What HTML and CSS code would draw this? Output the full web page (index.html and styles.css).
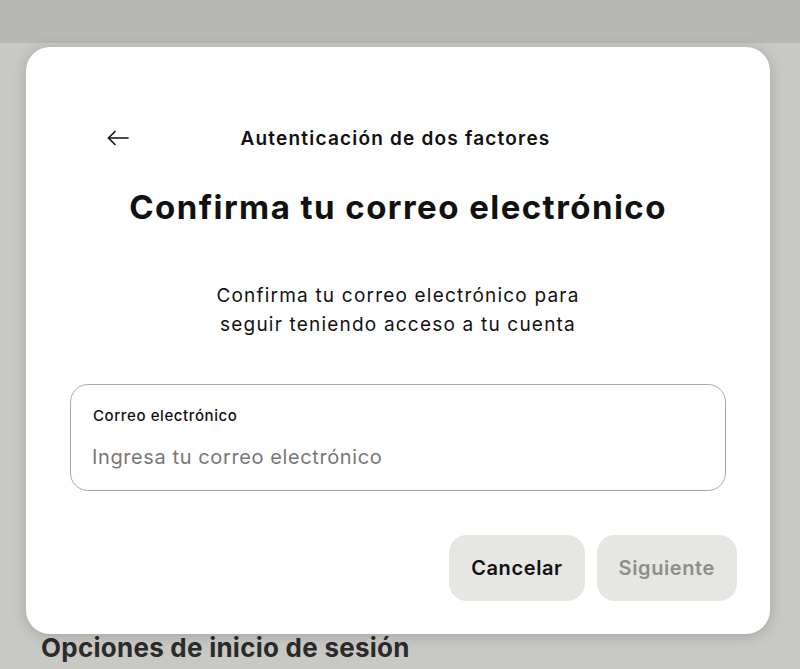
FILE: index.html
```html
<!DOCTYPE html>
<html lang="es">
<head>
    <meta charset="UTF-8">
    <meta name="viewport" content="width=device-width, initial-scale=1.0">
    <title>Autenticación de dos factores</title>
    <link rel="stylesheet" href="styles.css">
</head>
<body>

<div class="page">
    <div class="topbar"></div>
    <h3 class="section-title">Opciones de inicio de sesión</h3>
</div>

<div class="overlay">
    <div class="modal">
        <!-- Cabecera -->
        <div class="modal-header">
            <button class="btn-back" aria-label="Volver">
                <svg width="24" height="24" viewBox="0 0 24 24" fill="none" stroke="#111" stroke-width="1.6" stroke-linecap="round" stroke-linejoin="round">
                    <path d="M22 12H2.5"/>
                    <path d="M9 5.5L2.5 12L9 18.5"/>
                </svg>
            </button>
            <span class="header-title">Autenticación de dos factores</span>
        </div>

        <h1 class="modal-title">Confirma tu correo electrónico</h1>

        <p class="modal-text">Confirma tu correo electrónico para<br>seguir teniendo acceso a tu cuenta</p>

        <!-- Campo de correo -->
        <label class="field" for="email">
            <span class="field-label">Correo electrónico</span>
            <input type="email" id="email" name="email" placeholder="Ingresa tu correo electrónico">
        </label>

        <div class="modal-actions">
            <button class="btn">Cancelar</button>
            <button class="btn btn-disabled" disabled>Siguiente</button>
        </div>
    </div>
</div>

</body>
</html>
```

FILE: styles.css
```css
body {
    margin: 0;
    font-family: Inter, "Noto Sans", sans-serif;
    background-color: #c8c8c5;
    color: #111;
    height: 669px;
    overflow: hidden;
}
.page {
    height: 669px;
}
.topbar {
    height: 43px;
    background-color: #b7b8b3;
}
.section-title {
    margin: 0;
    padding-top: 589px;
    padding-left: 41px;
    font-size: 26px;
    font-weight: 700;
    color: #2b2b2a;
    letter-spacing: 0.25px;
}
.overlay {
    position: absolute;
    top: 0;
    left: 0;
    width: 800px;
    height: 669px;
}
.modal {
    margin: 47px 0 0 26px;
    width: 744px;
    height: 587px;
    box-sizing: border-box;
    background: #fff;
    border-radius: 24px;
    box-shadow: 0 2px 14px rgba(0, 0, 0, 0.18);
    display: flex;
    flex-direction: column;
    padding: 0 44px;
}
.modal-header {
    position: relative;
    height: 48px;
    margin-top: 67px;
    display: flex;
    align-items: center;
    justify-content: center;
}
.btn-back {
    position: absolute;
    left: 24px;
    top: 0;
    width: 48px;
    height: 48px;
    border: none;
    background: none;
    padding: 0;
    display: flex;
    align-items: center;
    justify-content: center;
    cursor: pointer;
}
.header-title {
    margin-right: 5px;
    font-size: 19px;
    font-weight: 600;
    letter-spacing: 1.2px;
}
.modal-title {
    margin: 23px 0 0;
    text-align: center;
    font-size: 33px;
    font-weight: 700;
    letter-spacing: 1.45px;
    line-height: 44px;
}
.modal-text {
    margin: 52px 0 0;
    text-align: center;
    font-size: 19px;
    line-height: 29px;
    letter-spacing: 1.2px;
    color: #111;
}
.field {
    display: block;
    margin-top: 45px;
    height: 107px;
    box-sizing: border-box;
    border: 1px solid #a8a8a8;
    border-radius: 18px;
    padding: 22px 22px 0 21px;
}
.field-label {
    display: block;
    margin-left: 1px;
    font-size: 15px;
    line-height: 18px;
    font-weight: 500;
    letter-spacing: 0.6px;
    color: #111;
}
.field input {
    display: block;
    width: 100%;
    margin-top: 20px;
    border: none;
    outline: none;
    padding: 0;
    font-family: inherit;
    font-size: 20px;
    font-weight: 400;
    letter-spacing: 0.6px;
    color: #111;
}
.field input::placeholder {
    color: #777;
}
.modal-actions {
    display: flex;
    justify-content: flex-end;
    gap: 12px;
    margin: 44px -11px 0 0;
}
.btn {
    height: 66px;
    padding: 0 22px;
    border: none;
    border-radius: 18px;
    background-color: #e6e6e2;
    font-family: inherit;
    font-size: 20px;
    font-weight: 600;
    letter-spacing: 0.6px;
    color: #111;
    cursor: pointer;
}
.btn-disabled {
    color: #8e8e8c;
    cursor: default;
}
```
